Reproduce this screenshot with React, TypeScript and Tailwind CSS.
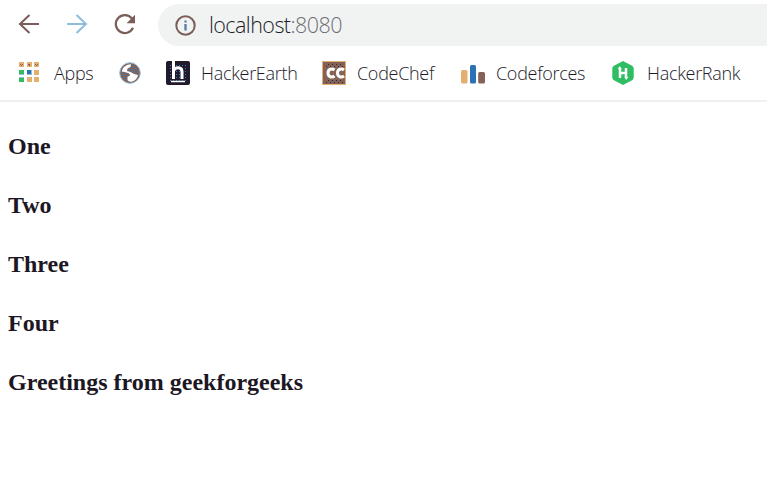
import type { ReactNode } from 'react';

function Toolbar() {
  return (
    <div className="flex h-[46px] items-start pl-[17px] pt-1">
      <svg className="mt-2 h-6 w-6 shrink-0" viewBox="0 0 24 24" fill="none" stroke="#7a5e59" strokeWidth="2">
        <path d="M22 12H3.500M12.500 3L3 12l9.500 9" />
      </svg>
      <svg className="ml-6 mt-2 h-6 w-6 shrink-0" viewBox="0 0 24 24" fill="none" stroke="#91bddb" strokeWidth="2">
        <path d="M2 12h18.500M11.500 3L21 12l-9.500 9" />
      </svg>
      <svg className="ml-6 mt-2 h-6 w-6 shrink-0" viewBox="0 0 24 24" fill="none" stroke="#7a5e59" strokeWidth="2.200">
        <path d="M20 15.800a9 9 0 1 1-1.100-9.300" />
        <path d="M22 2.800v8.400h-8.400z" fill="#7a5e59" stroke="none" />
      </svg>
      <div className="ml-[21px] flex h-[42px] flex-1 items-center rounded-l-full bg-[#f0f3f2] pl-[17px]">
        <svg className="h-[21px] w-[21px] shrink-0" viewBox="0 0 21 21" fill="none" stroke="#7a5e59" strokeWidth="2">
          <circle cx="10.500" cy="10.500" r="9.200" />
          <path d="M10.500 9v6.500M10.500 5.500v2" stroke="#567d9d" strokeWidth="2.300" />
        </svg>
        <span className="ml-[13px] whitespace-nowrap text-[21.500px] tracking-[-0.550px] text-[#1d1b29]">
          localhost<span className="text-[#6e6c74]">:8080</span>
        </span>
      </div>
    </div>
  );
}

function AppsIcon() {
  return (
    <svg className="h-6 w-6" viewBox="0 0 24 24" shapeRendering="crispEdges">
      <path fill="#e4b071" d="M0 1h5v5H0zM8 1h5v5H8zM15 1h5v5h-5zM15 9h5v5h-5zM8 16h5v5H8zM15 16h5v5h-5z" />
      <path fill="#846257" d="M1 3h1v1H1zM3 3h1v1H3zM2 4h1v1H2zM9 3h2v1H9zM10 4h1v1h-1zM16 3h1v1h-1zM18 3h1v1h-1zM17 4h1v1h-1z" />
      <path fill="#2ebd60" d="M0 9h5v4H0zM0 17h5v4H0z" />
      <path fill="#2c71b4" d="M8 9h4v4H8z" />
      <path fill="#91bddb" d="M0 13h5v1H0zM0 16h5v1H0zM8 13h4v1H8zM12 9h1v5h-1z" />
    </svg>
  );
}

function GlobeIcon() {
  return (
    <svg className="h-6 w-6" viewBox="0 0 24 24">
      <defs>
        <pattern id="globe-dots" width="2" height="2" patternUnits="userSpaceOnUse">
          <path d="M0 0h1v1H0z" fill="#347bb8" />
        </pattern>
      </defs>
      <circle cx="11" cy="12" r="10.300" fill="#846257" stroke="#91bddb" />
      <circle cx="11" cy="12" r="8.500" fill="url(#globe-dots)" />
      <path fill="#fff" d="M12 3.200C8 3 3.500 6 2.800 10.500l4.700 1.100c2 .4 3.500 1.200 3.500 3l-2.500 1.200v3.500c1.300 1.400 3.200 1.700 5 1.300 3-.8 5-3.500 5.500-6.500l-4-1-3.500-2-3.500-1 .5-2.500 3-1.500z" />
    </svg>
  );
}

function HackerEarthIcon() {
  return (
    <svg className="h-6 w-6" viewBox="0 0 24 24">
      <defs>
        <pattern id="earth-dots" width="3" height="3" patternUnits="userSpaceOnUse">
          <rect x="1" y="1" width="1" height="1" fill="#347bb8" />
        </pattern>
      </defs>
      <rect width="24" height="24" rx="2" fill="#201a2a" />
      <path d="M2 2h20v19H2z" fill="url(#earth-dots)" />
      <path d="M7.500 0v18M7.500 9.500c2-4 8.500-4 8.500 1.200V18" fill="none" stroke="#fff" strokeWidth="3" />
      <path d="M5 20.500h14" stroke="#fff" strokeWidth="1.500" />
    </svg>
  );
}

function CodeChefIcon() {
  return (
    <svg className="h-6 w-6" viewBox="0 0 24 24">
      <defs>
        <pattern id="chef-dots" width="4" height="4" patternUnits="userSpaceOnUse">
          <path d="M0 1h1v1H0zM2 3h1v1H2z" fill="#302435" />
        </pattern>
      </defs>
      <rect x=".5" y=".5" width="23" height="23" fill="#846257" stroke="#e4b071" />
      <path d="M3 3h18v4H3zM3 18h18v4H3z" fill="url(#chef-dots)" />
      <path d="M12.500 9C10 7 6 8 6 12s4 5 6.500 3M22 9c-2.500-2-6.500-1-6.500 3s4 5 6.500 3" fill="none" stroke="#fff" strokeWidth="3" />
    </svg>
  );
}

function CodeforcesIcon() {
  return (
    <svg className="h-6 w-6" viewBox="0 0 24 24">
      <rect x="0" y="9" width="6.500" height="13.500" rx="1.500" fill="#e4b071" />
      <rect x="9" y="4" width="6" height="18.500" rx="1.500" fill="#2c71b4" />
      <rect x="17.200" y="11" width="6.800" height="11.500" rx="1.500" fill="#846257" />
    </svg>
  );
}

function HackerRankIcon() {
  return (
    <svg className="h-6 w-6" viewBox="0 0 24 24">
      <path d="M11 0l9.500 5 1.200 2v10l-1.200 2L11 24l-9.500-5L.3 17V7l1.200-2z" fill="#2ebd60" />
      <path d="M8 7v10M14 7v10M8 12h6" stroke="#fff" strokeWidth="2.500" fill="none" />
      <path d="M5.500 8L8 5l1.500 3zM12.500 16h4L14 19z" fill="#fff" />
    </svg>
  );
}

function Bookmark({ icon, label, width }: { icon: ReactNode; label?: string; width: string }) {
  return (
    <div className={`flex h-full shrink-0 items-center ${width}`}>
      <span className="h-6 w-6 shrink-0">{icon}</span>
      {label && <span className="mb-px ml-[11px] whitespace-nowrap text-[18px] leading-6 tracking-[-0.300px] text-[#1d1b29]">{label}</span>}
    </div>
  );
}

function BookmarksBar() {
  return (
    <div className="flex h-[54px] items-center pl-[19px]">
      <Bookmark icon={<AppsIcon />} label="Apps" width="w-[100px]" />
      <Bookmark icon={<GlobeIcon />} width="w-[47px]" />
      <Bookmark icon={<HackerEarthIcon />} label="HackerEarth" width="w-[156px]" />
      <Bookmark icon={<CodeChefIcon />} label="CodeChef" width="w-[139px]" />
      <Bookmark icon={<CodeforcesIcon />} label="Codeforces" width="w-[151px]" />
      <Bookmark icon={<HackerRankIcon />} label="HackerRank" width="w-[150px]" />
    </div>
  );
}

const messages = ['One', 'Two', 'Three', 'Four', 'Greetings from geekforgeeks'];

export default function App() {
  return (
    <div className="h-[487px] w-[767px] overflow-hidden bg-white">
      <header className="border-b-2 border-[#f0f0f0] font-['Open_Sans','Noto_Sans',sans-serif] font-[350]">
        <Toolbar />
        <BookmarksBar />
      </header>
      <main className="flex flex-col gap-8 pl-2 pt-[31px] font-['Liberation_Serif',serif] text-[24px] font-bold leading-[27px] text-[#1d1724]">
        {messages.map((message) => (
          <h3 key={message}>{message}</h3>
        ))}
      </main>
    </div>
  );
}
